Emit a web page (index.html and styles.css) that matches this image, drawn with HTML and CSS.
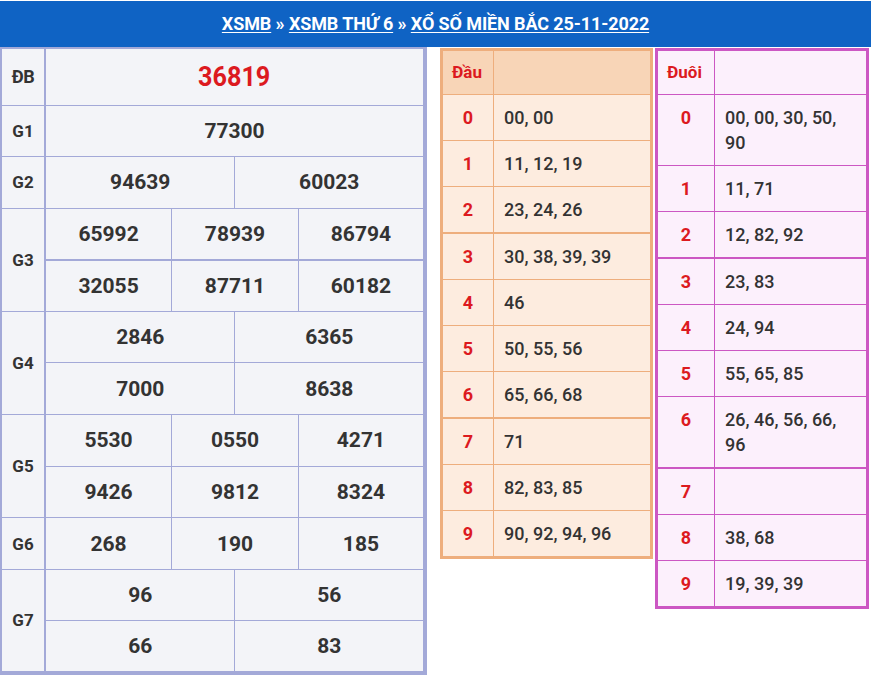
FILE: index.html
```html
<!DOCTYPE html>
<html lang="vi">
<head>
<meta charset="utf-8">
<title>XSMB 25-11-2022</title>
<link rel="stylesheet" href="styles.css">
</head>
<body>
<div class="header">
  <div class="crumbs"><a href="#">XSMB</a> » <a href="#">XSMB THỨ 6</a> » <a href="#">XỔ SỐ MIỀN BẮC 25-11-2022</a></div>
</div>
<div class="main">
  <table class="kq">
    <colgroup>
      <col class="c-label"><col><col><col><col><col><col>
    </colgroup>
    <tr class="r-db"><td class="lbl lbl-db">ĐB</td><td colspan="6" class="num db"><span>36819</span></td></tr>
    <tr><td class="lbl">G1</td><td colspan="6" class="num">77300</td></tr>
    <tr><td class="lbl">G2</td><td colspan="3" class="num">94639</td><td colspan="3" class="num">60023</td></tr>
    <tr><td class="lbl" rowspan="2">G3</td><td colspan="2" class="num">65992</td><td colspan="2" class="num">78939</td><td colspan="2" class="num">86794</td></tr>
    <tr class="thick"><td colspan="2" class="num">32055</td><td colspan="2" class="num">87711</td><td colspan="2" class="num">60182</td></tr>
    <tr><td class="lbl" rowspan="2">G4</td><td colspan="3" class="num">2846</td><td colspan="3" class="num">6365</td></tr>
    <tr><td colspan="3" class="num">7000</td><td colspan="3" class="num">8638</td></tr>
    <tr><td class="lbl" rowspan="2">G5</td><td colspan="2" class="num">5530</td><td colspan="2" class="num">0550</td><td colspan="2" class="num">4271</td></tr>
    <tr><td colspan="2" class="num">9426</td><td colspan="2" class="num">9812</td><td colspan="2" class="num">8324</td></tr>
    <tr><td class="lbl">G6</td><td colspan="2" class="num">268</td><td colspan="2" class="num">190</td><td colspan="2" class="num">185</td></tr>
    <tr><td class="lbl" rowspan="2">G7</td><td colspan="3" class="num">96</td><td colspan="3" class="num">56</td></tr>
    <tr><td colspan="3" class="num">66</td><td colspan="3" class="num">83</td></tr>
  </table>

  <table class="lt dau">
    <colgroup><col class="c-k"><col></colgroup>
    <thead><tr><th>Đầu</th><th></th></tr></thead>
    <tbody>
      <tr><td class="k">0</td><td>00, 00</td></tr>
      <tr><td class="k">1</td><td>11, 12, 19</td></tr>
      <tr><td class="k">2</td><td>23, 24, 26</td></tr>
    </tbody>
    <tbody>
      <tr><td class="k">3</td><td>30, 38, 39, 39</td></tr>
      <tr><td class="k">4</td><td>46</td></tr>
      <tr><td class="k">5</td><td>50, 55, 56</td></tr>
      <tr><td class="k">6</td><td>65, 66, 68</td></tr>
    </tbody>
    <tbody>
      <tr><td class="k">7</td><td>71</td></tr>
      <tr><td class="k">8</td><td>82, 83, 85</td></tr>
      <tr><td class="k">9</td><td>90, 92, 94, 96</td></tr>
    </tbody>
  </table>

  <table class="lt duoi">
    <colgroup><col class="c-k2"><col></colgroup>
    <thead><tr><th>Đuôi</th><th></th></tr></thead>
    <tbody>
      <tr><td class="k">0</td><td>00, 00, 30, 50, 90</td></tr>
      <tr><td class="k">1</td><td>11, 71</td></tr>
      <tr><td class="k">2</td><td>12, 82, 92</td></tr>
    </tbody>
    <tbody>
      <tr><td class="k">3</td><td>23, 83</td></tr>
      <tr><td class="k">4</td><td>24, 94</td></tr>
      <tr><td class="k">5</td><td>55, 65, 85</td></tr>
      <tr><td class="k">6</td><td>26, 46, 56, 66, 96</td></tr>
    </tbody>
    <tbody>
      <tr><td class="k">7</td><td></td></tr>
      <tr><td class="k">8</td><td>38, 68</td></tr>
      <tr><td class="k">9</td><td>19, 39, 39</td></tr>
    </tbody>
  </table>
</div>
</body>
</html>
```

FILE: styles.css
```css
* { box-sizing: border-box; }
html, body { margin: 0; padding: 0; background: #fff; }
body {
  font-family: Roboto, "Noto Sans", "DejaVu Sans", sans-serif;
  color: #333;
  width: 871px;
}

.header {
  margin-top: 1px;
  height: 46px;
  background: #0f63c4;
  display: flex;
  align-items: center;
  justify-content: center;
}
.crumbs {
  color: #fff;
  font-weight: 700;
  font-size: 18px;
  line-height: 22px;
  white-space: nowrap;
  letter-spacing: -0.1px;
}
.crumbs a { color: #fff; text-decoration: underline; text-underline-offset: 2px; }

.main {
  display: flex;
  align-items: flex-start;
}

/* results table */
.kq {
  width: 427px;
  border-collapse: collapse;
  table-layout: fixed;
  background: #f3f4f8;
  border-top: 2px solid #a3a9d8;
  border-left: 2px solid #a3a9d8;
  border-right: 4px solid #a3a9d8;
  border-bottom: 4px solid #a3a9d8;
}
.kq .c-label { width: 44px; }
.kq td {
  border: 1px solid #a3a9d8;
  height: 51.6px;
  padding: 0;
  text-align: center;
  vertical-align: middle;
}
.kq tr.r-db td { height: 57px; }
.kq tr.thick td { border-top-width: 2px; }
.kq td.lbl {
  font-size: 17px;
  font-weight: 700;
  color: #333;
  border-right-width: 2px;
}
.kq td.lbl-db {
  font-size: 18px;
  letter-spacing: -0.5px;
}
.kq td.num {
  font-size: 21px;
  font-weight: 700;
  color: #333;
}
.kq td.db span {
  display: inline-block;
  font-size: 28px;
  color: #dc1a1f;
  transform: scaleX(0.9);
}

/* loto tables */
.lt {
  border-collapse: collapse;
  table-layout: fixed;
  font-size: 18px;
  line-height: 25px;
  margin-top: 1px;
}
.lt th, .lt td {
  padding: 10px 10px;
  vertical-align: top;
  text-align: left;
}
.lt th {
  height: 42px;
  color: #dc1a1f;
  font-weight: 700;
  font-size: 17px;
  padding: 9px 9px;
}
.lt td { font-weight: 500; color: #333; }
.lt td.k {
  text-align: center;
  color: #dc1a1f;
  font-weight: 700;
}

.dau {
  width: 213px;
  margin-left: 13px;
  background: #fdecdf;
  border: 3px solid #eeae7d;
}
.dau .c-k { width: 52px; }
.dau th { background: #f8d5b7; border: 1px solid #eeae7d; }
.dau td { border: 1px solid #eeae7d; }
.dau tbody + tbody { border-top: 2px solid #eeae7d; }

.duoi {
  width: 214px;
  margin-left: 2px;
  background: #fcf0fc;
  border: 3px solid #cc57c3;
}
.duoi .c-k2 { width: 58px; }
.duoi th, .duoi td { border: 1px solid #cc57c3; }
.duoi tbody + tbody { border-top: 2px solid #cc57c3; }
```
